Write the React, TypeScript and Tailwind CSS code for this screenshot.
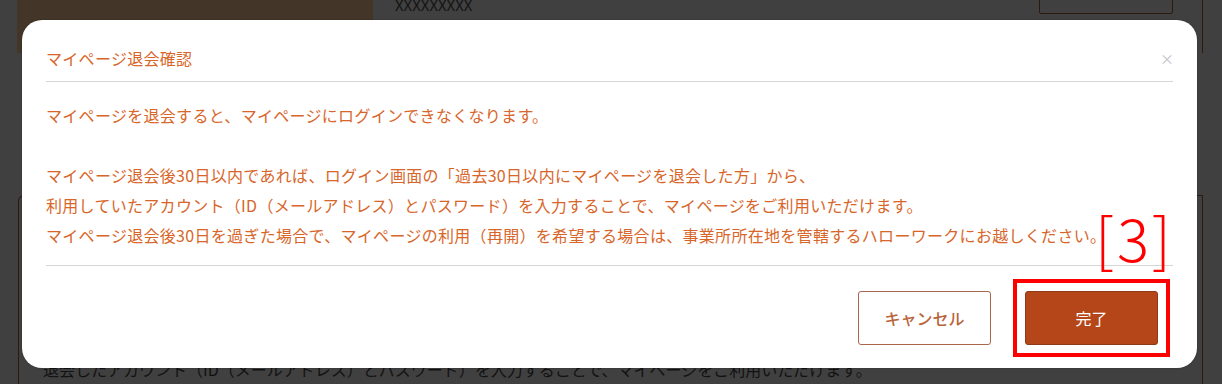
import React from 'react'

const jp = "font-['Noto_Sans_CJK_JP','Noto_Sans',sans-serif]"

// Dimmed page behind the dialog (overlay already baked into the colours).
function BackdropPage() {
  return (
    <div className="h-[384px] w-[1222px] overflow-hidden bg-[#404040]">
      {/* top card */}
      <div className="ml-[17px] mr-[19px] mt-[-6px] flex h-[59px] border-r border-[#2c1a10]">
        <div className="w-[356px] bg-[#433629]" />
        <div className="flex flex-1 items-start justify-between pl-[22px]">
          <span className={`${jp} mt-[1px] text-[15px] leading-[20px] text-[#141414]`}>XXXXXXXXX</span>
          <div className="mr-[29px] h-[20px] w-[134px] rounded-b-[2px] border border-[#2c1a10]" />
        </div>
      </div>
      {/* lower card */}
      <div className="ml-[18px] mr-[19px] mt-[142px] h-[200px] rounded-tl-[6px] border-l border-r border-t border-[#2c1a10] pl-[24px] pt-[162px]">
        <p className={`${jp} text-[16px] leading-[22px] text-[#121212]`}>
          退会したアカウント（ID（メールアドレス）とパスワード）を入力することで、マイページをご利用いただけます。
        </p>
      </div>
    </div>
  )
}

function ConfirmDialog() {
  return (
    <div className={`${jp} absolute left-[22px] top-[20px] w-[1175px] rounded-[20px] bg-white px-[24px] shadow-[0_0_2px_rgba(0,0,0,0.3)]`}>
      {/* header */}
      <div className="flex items-center justify-between border-b border-[#d6d6d6] pb-[11px] pt-[26px]">
        <h2 className="text-[16px] leading-[24px] tracking-[0.3px] text-[#d8662a]">マイページ退会確認</h2>
        <span className="mr-[-1px] text-[14px] leading-[24px] text-[#c4c4c4]">×</span>
      </div>
      {/* body */}
      <div className="relative border-b border-[#d6d6d6] pb-[15px] pt-[18px] text-[16px] leading-[30px] tracking-[0.3px] text-[#d8662a]">
        <p>マイページを退会すると、マイページにログインできなくなります。</p>
        <p className="mt-[30px]">マイページ退会後30日以内であれば、ログイン画面の「過去30日以内にマイページを退会した方」から、</p>
        <p>利用していたアカウント（ID（メールアドレス）とパスワード）を入力することで、マイページをご利用いただけます。</p>
        <p>マイページ退会後30日を過ぎた場合で、マイページの利用（再開）を希望する場合は、事業所所在地を管轄するハローワークにお越しください。</p>
        <span className="absolute bottom-[-6px] right-[-1px] text-[60px] font-light leading-[70px] tracking-[3px] text-[#ff0000]">[3]</span>
      </div>
      {/* footer */}
      <div className="flex items-center justify-end gap-[22px] pb-[11px] pr-[3px] pt-[13px]">
        <button className="h-[54px] w-[133px] rounded-[3px] border border-[#a8664a] bg-white text-[16px] font-medium text-[#b8643c]">
          キャンセル
        </button>
        <div className="border-4 border-[#ff0000] p-[8px]">
          <button className="block h-[54px] w-[133px] rounded-[3px] border border-[#8e3a16] bg-[#b5461a] text-[16px] text-white">
            完了
          </button>
        </div>
      </div>
    </div>
  )
}

export default function App() {
  return (
    <div className="relative h-[384px] w-[1222px] overflow-hidden">
      <BackdropPage />
      <ConfirmDialog />
    </div>
  )
}
